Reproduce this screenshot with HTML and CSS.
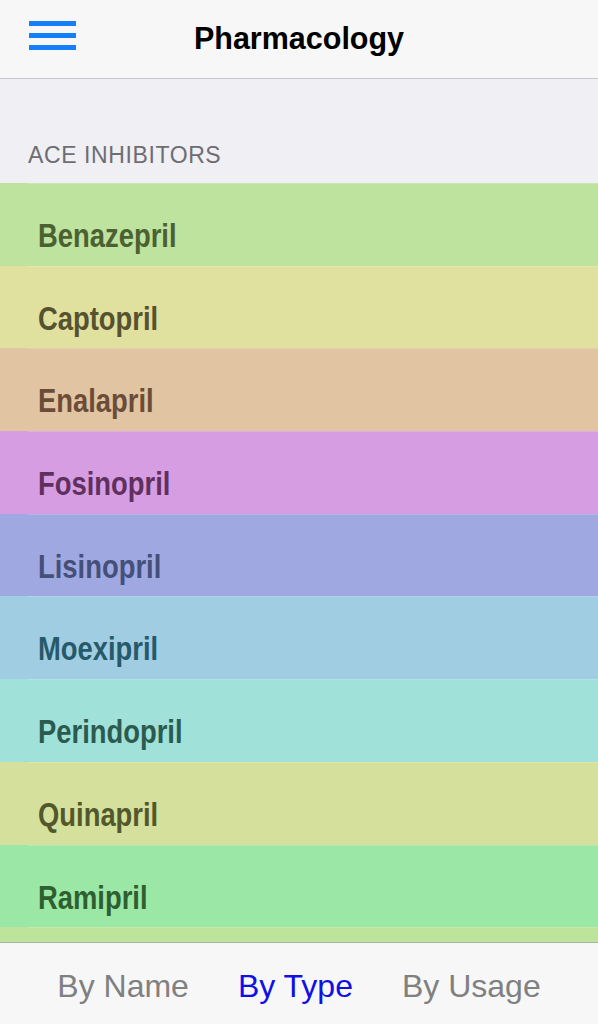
FILE: index.html
```html
<!DOCTYPE html>
<html lang="en">
<head>
    <meta charset="UTF-8">
    <meta name="viewport" content="width=device-width, initial-scale=1.0">
    <title>Pharmacology</title>
    <link rel="stylesheet" href="styles.css">
</head>
<body>
    <div class="app">
        <header class="nav-bar">
            <button class="menu-btn" aria-label="Menu">
                <span></span><span></span><span></span>
            </button>
            <h1 class="nav-title">Pharmacology</h1>
        </header>

        <div class="content">
            <div class="section-header">ACE INHIBITORS</div>
            <ul class="drug-list">
                <li class="drug c1"><div class="cell"><span>Benazepril</span></div></li>
                <li class="drug c2"><div class="cell"><span>Captopril</span></div></li>
                <li class="drug c3"><div class="cell"><span>Enalapril</span></div></li>
                <li class="drug c4"><div class="cell"><span>Fosinopril</span></div></li>
                <li class="drug c5"><div class="cell"><span>Lisinopril</span></div></li>
                <li class="drug c6"><div class="cell"><span>Moexipril</span></div></li>
                <li class="drug c7"><div class="cell"><span>Perindopril</span></div></li>
                <li class="drug c8"><div class="cell"><span>Quinapril</span></div></li>
                <li class="drug c9"><div class="cell"><span>Ramipril</span></div></li>
                <li class="drug c10"><div class="cell"></div></li>
            </ul>
        </div>

        <!-- tabs -->
        <nav class="tab-bar">
            <a class="tab">By Name</a>
            <a class="tab active">By Type</a>
            <a class="tab">By Usage</a>
        </nav>
    </div>
</body>
</html>
```

FILE: styles.css
```css
* {
    box-sizing: border-box;
}
body {
    margin: 0;
    font-family: "Liberation Sans", Arial, sans-serif;
    background: #efeff4;
}
.app {
    width: 598px;
    height: 1024px;
    display: flex;
    flex-direction: column;
    overflow: hidden;
}
.nav-bar {
    height: 79px;
    flex-shrink: 0;
    background: #f7f7f8;
    border-bottom: 1px solid #c8c7cc;
    display: flex;
    align-items: center;
    justify-content: center;
    position: relative;
}
.menu-btn {
    position: absolute;
    left: 29px;
    top: 21px;
    width: 47px;
    height: 29px;
    padding: 0;
    border: none;
    background: none;
    display: flex;
    flex-direction: column;
    justify-content: space-between;
}
.menu-btn span {
    display: block;
    height: 5px;
    background: #157efb;
}
.nav-title {
    margin: 0 0 2px 0;
    font-size: 30.5px;
    font-weight: bold;
    color: #000;
}
.content {
    flex: 1;
    overflow: hidden;
}
.section-header {
    height: 104px;
    padding: 63px 0 0 28px;
    font-size: 23px;
    color: #6d6d72;
    letter-spacing: 0.6px;
}
.drug-list {
    list-style: none;
    margin: 0;
    padding: 0;
}
.drug {
    height: 82.7px;
    padding-left: 28px;
}
.cell {
    height: 100%;
    border-top: 1px solid rgba(255, 255, 255, 0.18);
    padding: 32px 0 0 10px;
    white-space: nowrap;
}
.cell span {
    display: inline-block;
    font-weight: bold;
    font-size: 33px;
    line-height: 40px;
    transform: scaleX(0.83);
    transform-origin: left center;
}
.c1 { background: #bde39e; color: #4b6131; }
.c2 { background: #e0e09f; color: #56512f; }
.c3 { background: #e1c4a2; color: #6b4c38; }
.c4 { background: #d79de2; color: #5f305e; }
.c5 { background: #a0a8e2; color: #44507a; }
.c6 { background: #a0cde2; color: #265a6a; }
.c7 { background: #a0e1d9; color: #2b5a4f; }
.c8 { background: #d5e09c; color: #52582b; }
.c9 { background: #9be8a6; color: #2f5f30; }
.c10 { background: #bde49a; color: #4b6131; }
.tab-bar {
    height: 82px;
    flex-shrink: 0;
    background: #f7f7f7;
    border-top: 1px solid #a9b0a5;
    display: flex;
    justify-content: center;
    align-items: center;
    gap: 49px;
    padding-top: 6px;
}
.tab {
    font-size: 32px;
    color: #808080;
}
.tab.active {
    color: #1010e6;
}
```
